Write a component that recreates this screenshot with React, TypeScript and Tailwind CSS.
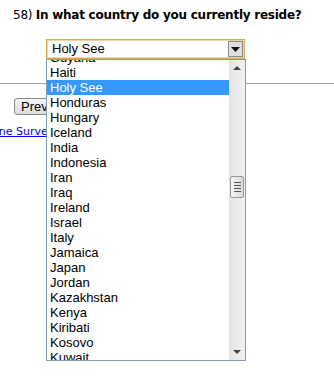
const countries = [
  "Guyana",
  "Haiti",
  "Holy See",
  "Honduras",
  "Hungary",
  "Iceland",
  "India",
  "Indonesia",
  "Iran",
  "Iraq",
  "Ireland",
  "Israel",
  "Italy",
  "Jamaica",
  "Japan",
  "Jordan",
  "Kazakhstan",
  "Kenya",
  "Kiribati",
  "Kosovo",
  "Kuwait",
  "Kyrgyzstan"
];

const selected = "Holy See";

export default function App() {
  return (
    <div className="relative h-[376px] w-[334px] overflow-hidden bg-white font-['DejaVu_Sans',Verdana,sans-serif] text-black">
      <div className="whitespace-nowrap pl-[13px] pt-[7px] text-[12px] leading-[16px] tracking-[-0.25px]">
        58) <span className="font-bold">In what country do you currently reside?</span>
      </div>

      {/* closed select */}
      <div className="ml-[46px] mt-[16px] flex h-[20px] w-[199px] items-center border border-[#d9ad5c] bg-white pl-[1px] shadow-[inset_0_0_0_1px_#f0d49a]">
        <span className="flex-1 pl-[4px] font-['Liberation_Sans',Arial,sans-serif] text-[13px] leading-[16px]">
          {selected}
        </span>
        <div className="mr-[1px] flex h-[16px] w-[15px] items-center justify-center border border-[#8a8a8a] bg-[#dedede]">
          <svg width="9" height="5" viewBox="0 0 9 5">
            <path d="M0 0h9L4.5 5z" fill="#111" />
          </svg>
        </div>
      </div>

      <div className="mt-[24px] h-px w-full bg-[#a0a0a0]" />

      <div className="ml-[14px] mt-[14px] flex h-[17px] w-[60px] items-center rounded-[3px] border border-[#8a8a8a] bg-gradient-to-b from-[#f6f6f6] to-[#dcdcdc] pl-[6px] font-['Liberation_Sans',Arial,sans-serif] text-[13px] leading-[15px]">
        Previous
      </div>

      <div className="ml-[-23px] mt-[10px] text-[11px] leading-[14px] text-[#0000ee] underline">
        Online Survey
      </div>

      {/* open dropdown list */}
      <div className="absolute left-[46px] top-[59px] flex h-[302px] w-[200px] overflow-hidden border border-[#7f9db9] bg-white">
        <div className="relative flex-1 overflow-hidden">
          <div className="mt-[-10px] font-['Liberation_Sans',Arial,sans-serif] text-[13px]">
            {countries.map((c) => (
              <div
                key={c}
                className={
                  c === selected
                    ? "h-[15px] bg-[#3399ff] pl-[3px] leading-[15px] text-white"
                    : "h-[15px] pl-[3px] leading-[15px] text-black"
                }
              >
                {c}
              </div>
            ))}
          </div>
        </div>
        <div className="relative w-[16px] bg-gradient-to-r from-[#e4e4e4] to-[#f1f1f1]">
          <div className="flex h-[16px] items-center justify-center">
            <svg width="8" height="4" viewBox="0 0 8 4">
              <path d="M4 0L8 4H0z" fill="#444" />
            </svg>
          </div>
          <div className="absolute left-[1px] top-[116px] flex h-[22px] w-[14px] flex-col items-center justify-center gap-[2px] rounded-[2px] border border-[#999] bg-gradient-to-r from-[#f4f4f4] to-[#dadada]">
            <div className="h-px w-[7px] bg-[#555]" />
            <div className="h-px w-[7px] bg-[#555]" />
            <div className="h-px w-[7px] bg-[#555]" />
            <div className="h-px w-[7px] bg-[#555]" />
          </div>
          <div className="absolute bottom-0 flex h-[16px] w-full items-center justify-center">
            <svg width="8" height="4" viewBox="0 0 8 4">
              <path d="M0 0H8L4 4z" fill="#444" />
            </svg>
          </div>
        </div>
      </div>
    </div>
  );
}
